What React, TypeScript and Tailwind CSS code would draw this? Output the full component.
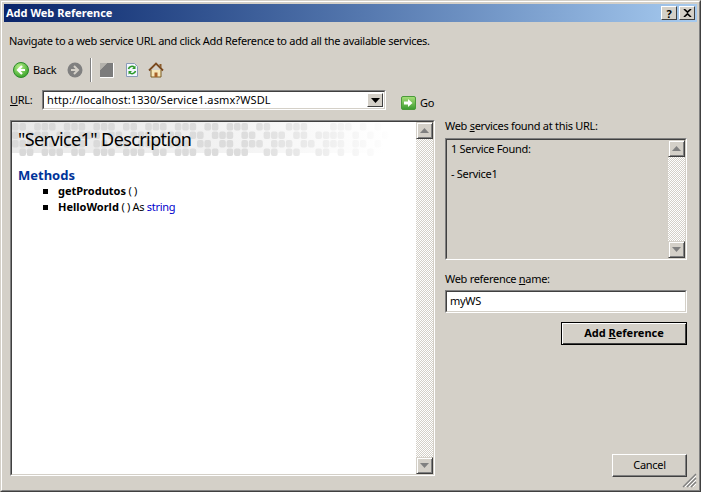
const font = { fontFamily: '"Noto Sans", "DejaVu Sans", sans-serif', letterSpacing: "-0.3px" };

function Sunken({ className = "", children }: { className?: string; children?: React.ReactNode }) {
  return (
    <div className={`border border-t-[#808080] border-l-[#808080] border-r-white border-b-white ${className}`}>
      <div className="flex h-full w-full border border-t-[#404040] border-l-[#404040] border-r-[#d4d0c8] border-b-[#d4d0c8]">
        {children}
      </div>
    </div>
  );
}

function ScrollBtn({ up, dark = false }: { up: boolean; dark?: boolean }) {
  return (
    <div className="flex h-[17px] w-[17px] shrink-0 items-center justify-center border border-t-[#d4d0c8] border-l-[#d4d0c8] border-r-[#404040] border-b-[#404040] bg-[#d4d0c8] shadow-[inset_1px_1px_0_#fff,inset_-1px_-1px_0_#808080]">
      <svg width="9" height="5" viewBox="0 0 9 5">
        <path d={up ? "M4.5 0L9 5H0Z" : "M0 0H9L4.5 5Z"} fill={dark ? "#000" : "#808080"} />
      </svg>
    </div>
  );
}

function ScrollBar() {
  return (
    <div className="flex w-[17px] shrink-0 flex-col justify-between bg-[repeating-conic-gradient(#d4d0c8_0_25%,#fff_0_50%)] bg-[length:2px_2px]">
      <ScrollBtn up />
      <ScrollBtn up={false} />
    </div>
  );
}

function Banner() {
  const rows = [
    "1101110111011101101110111011011101100111000111010100",
    "1011101101110110111011101101110110111011011110101010",
    "1110110111011011011101110110110111011101101110110100",
    "0110111011011101110110111011011100110110011010101000",
  ];
  return (
    <svg className="absolute left-0 top-0" width="404" height="34" viewBox="0 0 404 34">
      <defs>
        <linearGradient id="strip" x1="0" x2="1" y1="0" y2="0">
          <stop offset="0" stopColor="#e9e9e9" />
          <stop offset="0.45" stopColor="#f0f0f0" />
          <stop offset="0.92" stopColor="#ffffff" />
        </linearGradient>
        <linearGradient id="cell" gradientUnits="userSpaceOnUse" x1="0" x2="380" y1="0" y2="0">
          <stop offset="0" stopColor="#d9d9d9" />
          <stop offset="0.6" stopColor="#dcdcdc" />
          <stop offset="0.8" stopColor="#ececec" />
          <stop offset="1" stopColor="#ffffff" />
        </linearGradient>
      </defs>
      <rect x="0" y="0" width="404" height="31" fill="url(#strip)" />
      {rows.map((r, i) =>
        r.split("").map((c, j) =>
          c === "1" ? (
            <rect key={`${i}-${j}`} x={j * 7.4} y={1 + i * 8.5} width="6.6" height="7.5" rx="2" fill="url(#cell)" />
          ) : null,
        ),
      )}
    </svg>
  );
}

function BackIcon() {
  return (
    <svg width="16" height="16" viewBox="0 0 16 16">
      <defs>
        <radialGradient id="g" cx="0.4" cy="0.3" r="0.8">
          <stop offset="0" stopColor="#b8f08a" />
          <stop offset="1" stopColor="#2a9a1e" />
        </radialGradient>
      </defs>
      <circle cx="8" cy="8" r="7.5" fill="url(#g)" stroke="#2c8a2a" />
      <path d="M9 4L5 8l4 4M5 8h7" fill="none" stroke="#fff" strokeWidth="2.2" />
    </svg>
  );
}

function App() {
  return (
    <div style={font} className="h-[492px] w-[701px] border border-t-[#d4d0c8] border-l-[#d4d0c8] border-r-[#404040] border-b-[#404040] text-[11px] text-black">
      <div className="flex h-full w-full flex-col border border-t-white border-l-white border-r-[#808080] border-b-[#808080] bg-[#d4d0c8] p-[2px]">
        <div className="flex h-[18px] shrink-0 items-center justify-between bg-gradient-to-r from-[#0a246a] to-[#a6caef] pl-[2px] pr-[2px]">
          <span className="text-[11px] font-bold tracking-[0px] text-white">Add Web Reference</span>
          <div className="flex gap-[2px]">
            {["?", "✕"].map((t) => (
              <div key={t} className="flex h-[14px] w-[16px] items-center justify-center border border-t-white border-l-white border-r-[#404040] border-b-[#404040] bg-[#d4d0c8] text-[11px] font-bold leading-none">
                {t === "?" ? "?" : (
                  <svg width="9" height="8" viewBox="0 0 9 8"><path d="M1 0l3.5 3.2L8 0M1 8l3.5-3.2L8 8" fill="none" stroke="#000" strokeWidth="1.6" /></svg>
                )}
              </div>
            ))}
          </div>
        </div>

        <div className="flex min-h-0 flex-1 flex-col px-[6px]">
          <div className="ml-[-1px] mt-[11px] h-[16px] leading-[16px]">
            Navigate to a web service URL and click Add Reference to add all the available services.
          </div>

          <div className="mt-[9px] flex h-[24px] items-center">
            <div className="ml-[3px]"><BackIcon /></div>
            <span className="ml-[4px] w-[23px]">Back</span>
            <svg className="ml-[11px]" width="16" height="16" viewBox="0 0 16 16">
              <circle cx="8" cy="8" r="7.5" fill="#808080" />
              <path d="M7 4l4 4-4 4M11 8H4" fill="none" stroke="#d4d0c8" strokeWidth="2" />
            </svg>
            <div className="ml-[7px] h-[24px] w-[2px] border-l border-l-[#808080] border-r border-r-white" />
            <svg className="ml-[7px]" width="16" height="16" viewBox="0 0 16 16">
              <path d="M1 8L8 1H14V15H1Z" fill="#7c7c7c" />
              <path d="M1 1H8L1 8Z" fill="#b4b2ac" />
              <path d="M14.5 1v14.5H1" fill="none" stroke="#fff" />
            </svg>
            <svg className="ml-[9px]" width="16" height="16" viewBox="0 0 16 16">
              <path d="M2.5 1.5h8l3 3v10h-11Z" fill="#f2f6ff" stroke="#8a9bb8" />
              <path d="M4.5 7a3.5 3.5 0 0 1 6-1.5M11.5 9a3.5 3.5 0 0 1-6 1.5" fill="none" stroke="#2e9a2a" strokeWidth="1.6" />
              <path d="M11.5 3.5v3.5h-3.5ZM4.5 12.5V9h3.5Z" fill="#2e9a2a" />
            </svg>
            <svg className="ml-[8px]" width="16" height="16" viewBox="0 0 16 16">
              <path d="M3 8v7h10V8" fill="#f5e6b8" stroke="#7a5a20" />
              <path d="M1 8.5L8 1.5l7 7" fill="none" stroke="#7a4a20" strokeWidth="1.8" />
              <path d="M6.5 15v-4.5h3V15" fill="#a8622a" />
              <path d="M11.5 2h2v4l-2-2Z" fill="#8a5a2a" />
            </svg>
          </div>

          <div className="mt-[8px] flex h-[20px] items-center">
            <span className="w-[32px]"><u>U</u>RL:</span>
            <Sunken className="h-[20px] w-[344px]">
              <div className="flex h-full min-w-0 flex-1 items-center bg-white pl-[3px] tracking-[0.1px]">http://localhost:1330/Service1.asmx?WSDL</div>
              <div className="bg-white p-px pl-0">
                <div className="flex h-[14px] w-[16px] items-center justify-center border border-t-white border-l-white border-r-[#404040] border-b-[#404040] bg-[#d4d0c8]">
                  <svg width="9" height="5" viewBox="0 0 9 5"><path d="M0 0H9L4.5 5Z" fill="#000" /></svg>
                </div>
              </div>
            </Sunken>
            <svg className="ml-[15px] mt-[6px]" width="15" height="14" viewBox="0 0 15 14">
              <defs>
                <linearGradient id="go" x1="0" x2="0" y1="0" y2="1">
                  <stop offset="0" stopColor="#a8e07a" />
                  <stop offset="1" stopColor="#3a9a30" />
                </linearGradient>
              </defs>
              <rect x="0.5" y="0.5" width="14" height="13" rx="1.5" fill="url(#go)" stroke="#4a9a3a" />
              <path d="M3 5.5h4V3l4.5 4L7 11V8.5H3Z" fill="#fff" />
            </svg>
            <span className="ml-[4px] mt-[6px]">Go</span>
          </div>

          <div className="mt-[10px] flex min-h-0 flex-1 gap-[10px]">
            <Sunken className="h-[356px] w-[425px]">
              <div className="relative min-w-0 flex-1 bg-white">
                <Banner />
                <div className="relative pl-[6px] pt-[5px] text-[18px] leading-[24px] tracking-[-0.6px]">"Service1" Description</div>
                <div className="relative ml-[6px] mt-[16px] text-[13px] font-bold leading-[16px] tracking-[0px] text-[#003399]">Methods</div>
                <ul className="relative mt-[0px] pl-[31px] text-[11px] leading-[16px]">
                  <li className="flex items-center">
                    <span className="mr-[10px] h-[5px] w-[5px] bg-black" />
                    <b className="tracking-[0px]">getProdutos</b><span>&nbsp;( )</span>
                  </li>
                  <li className="flex items-center">
                    <span className="mr-[10px] h-[5px] w-[5px] bg-black" />
                    <b className="tracking-[0px]">HelloWorld</b><span>&nbsp;( ) As&nbsp;</span><span className="text-[#0000cc]">string</span>
                  </li>
                </ul>
              </div>
              <ScrollBar />
            </Sunken>

            <div className="flex h-[357px] w-[242px] flex-col">
              <div className="mt-[-2px] h-[16px] leading-[16px]">Web <u>s</u>ervices found at this URL:</div>
              <Sunken className="mt-[4px] h-[122px]">
                <div className="min-w-0 flex-1 pl-[4px] pt-[2px] leading-[13px]">
                  <div>1 Service Found:</div>
                  <div className="mt-[12px]">- Service1</div>
                </div>
                <ScrollBar />
              </Sunken>
              <div className="mt-[11px] h-[16px] leading-[16px]">Web reference <u>n</u>ame:</div>
              <Sunken className="mt-[3px] h-[23px]">
                <div className="flex flex-1 items-center bg-white pl-[3px]">myWS</div>
              </Sunken>
              <div className="mt-[9px] flex justify-end">
                <button className="h-[23px] w-[126px] border border-black bg-[#d4d0c8] font-bold tracking-[0px] shadow-[inset_1px_1px_0_#fff,inset_-1px_-1px_0_#404040]">
                  Add <u>R</u>eference
                </button>
              </div>
              <div className="mt-auto flex justify-end">
                <button className="h-[23px] w-[75px] border border-t-white border-l-white border-r-[#404040] border-b-[#404040] bg-[#d4d0c8] shadow-[inset_-1px_-1px_0_#808080]">
                  Cancel
                </button>
              </div>
            </div>
          </div>
          <div className="relative h-[14px] shrink-0">
            <svg className="absolute bottom-0 right-[-6px]" width="15" height="15" viewBox="0 0 15 15">
              <path d="M14 1L1 14M14 5L5 14M14 9L9 14" stroke="#808080" strokeWidth="1.4" />
              <path d="M14 3L3 14M14 7L7 14M14 11L11 14" stroke="#fff" strokeWidth="1" />
            </svg>
          </div>
        </div>
      </div>
    </div>
  );
}

export default App;
